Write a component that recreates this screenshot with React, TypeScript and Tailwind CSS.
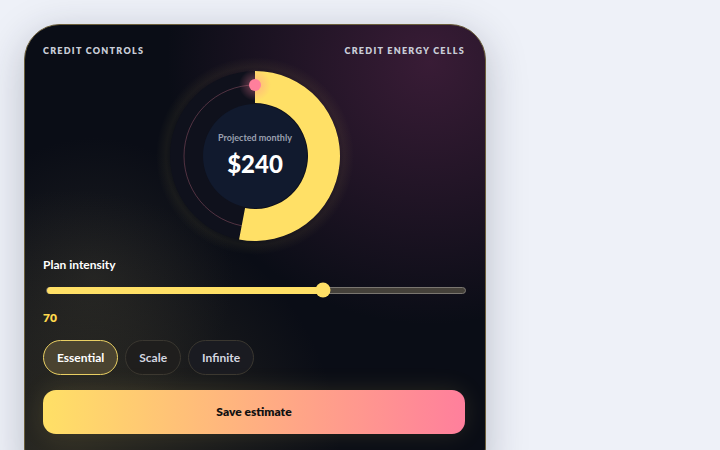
import React from "react";

const font = { fontFamily: "Lato, 'Noto Sans', sans-serif" };

function Donut() {
  const cx = 100, cy = 100;
  const rOut = 85, rIn = 53;
  const frac = 0.53;
  const a = frac * Math.PI * 2;
  const large = frac > 0.5 ? 1 : 0;
  const px = (r: number) => cx + r * Math.sin(a);
  const py = (r: number) => cy - r * Math.cos(a);
  const d = `M ${cx} ${cy - rOut} A ${rOut} ${rOut} 0 ${large} 1 ${px(rOut)} ${py(rOut)} L ${px(rIn)} ${py(rIn)} A ${rIn} ${rIn} 0 ${large} 0 ${cx} ${cy - rIn} Z`;
  return (
    <div className="relative w-[200px] h-[200px] -my-[15px]">
      <svg width="200" height="200" viewBox="0 0 200 200" className="absolute inset-0">
        <defs>
          <radialGradient id="glow" cx="50%" cy="50%" r="50%">
            <stop offset="80%" stopColor="rgba(255,224,102,0)" />
            <stop offset="90%" stopColor="rgba(255,224,102,0.05)" />
            <stop offset="100%" stopColor="rgba(255,224,102,0)" />
          </radialGradient>
          <radialGradient id="dotglow" cx="50%" cy="50%" r="50%">
            <stop offset="0%" stopColor="rgba(255,127,156,0.45)" />
            <stop offset="100%" stopColor="rgba(255,127,156,0)" />
          </radialGradient>
        </defs>
        <circle cx={cx} cy={cy} r={99} fill="url(#glow)" />
        <circle cx={cx} cy={cy} r={85} fill="#0f111c" />
        <circle cx={cx} cy={cy} r={71} fill="none" stroke="rgba(255,140,165,0.28)" strokeWidth="1" />
        <circle cx={cx} cy={cy} r={52} fill="#111a2e" />
        <path d={d} fill="#ffe066" />
        <circle cx={cx} cy={29} r={16} fill="url(#dotglow)" />
        <circle cx={cx} cy={29} r={6} fill="#ff7f9c" />
      </svg>
      <div className="absolute inset-0 flex flex-col items-center justify-center">
        <div className="text-[9px] font-bold text-[#9aa0b0] leading-none mt-[-4px]">Projected monthly</div>
        <div className="text-[24px] font-black text-white leading-none mt-[10px]">$240</div>
      </div>
    </div>
  );
}

export default function App() {
  return (
    <div className="w-[720px] h-[450px] overflow-hidden bg-[#eef1f8]" style={font}>
      <div className="pt-[24px] pl-[24px]">
        <div className="w-[462px] h-[460px] rounded-[36px] border border-[#6b5e3a] overflow-hidden shadow-[0_10px_40px_rgba(30,35,60,0.25)] bg-[#0a0d16] bg-[radial-gradient(circle_at_88%_8%,rgba(95,40,80,0.55),transparent_45%),radial-gradient(circle_at_10%_95%,rgba(110,100,60,0.35),transparent_45%),radial-gradient(circle_at_15%_55%,rgba(60,58,50,0.35),transparent_30%)]">
          <div className="px-[18px] pt-[20px] flex flex-col">
            <div className="flex justify-between items-center text-[9px] font-extrabold tracking-[0.14em] text-[#c9cdd8] leading-[12px] pr-[2px]">
              <span>CREDIT CONTROLS</span>
              <span>CREDIT ENERGY CELLS</span>
            </div>
            <div className="flex justify-center mt-[14px]">
              <Donut />
            </div>
            <div className="mt-[16px] text-[12px] font-bold text-white leading-[16px]">Plan intensity</div>
            <div className="mt-[10px] relative h-[14px] flex items-center pl-[3px] pr-0">
              <div className="relative w-[420px] h-[7px] rounded-full bg-[#45413a] border border-[#7a7670]">
                <div className="absolute left-0 top-[-1px] h-[7px] w-[66%] rounded-full bg-[#ffe066]" />
                <div className="absolute top-1/2 left-[66%] w-[15px] h-[15px] -translate-x-1/2 -translate-y-1/2 rounded-full bg-[#ffe066]" />
              </div>
            </div>
            <div className="mt-[14px] text-[12px] font-extrabold text-[#ffd84d] leading-[14px]">70</div>
            <div className="mt-[15px] flex gap-[7px]">
              <button className="h-[35px] px-[13px] rounded-full border border-[#e9cf63] bg-[#4a4330] text-[12px] font-bold text-white">Essential</button>
              <button className="h-[35px] px-[13px] rounded-full border border-[#3a3730] bg-[#1f1e1d] text-[12px] font-bold text-[#d4d7e0]">Scale</button>
              <button className="h-[35px] px-[13px] rounded-full border border-[#3a3730] bg-[#1a1b21] text-[12px] font-bold text-[#d4d7e0]">Infinite</button>
            </div>
            <button className="mt-[15px] h-[44px] w-[422px] rounded-[13px] bg-[linear-gradient(90deg,#ffe066,#ff7f9c)] text-[12px] font-extrabold text-[#111] shadow-[0_0_24px_rgba(255,224,102,0.12)]">Save estimate</button>
          </div>
        </div>
      </div>
    </div>
  );
}
